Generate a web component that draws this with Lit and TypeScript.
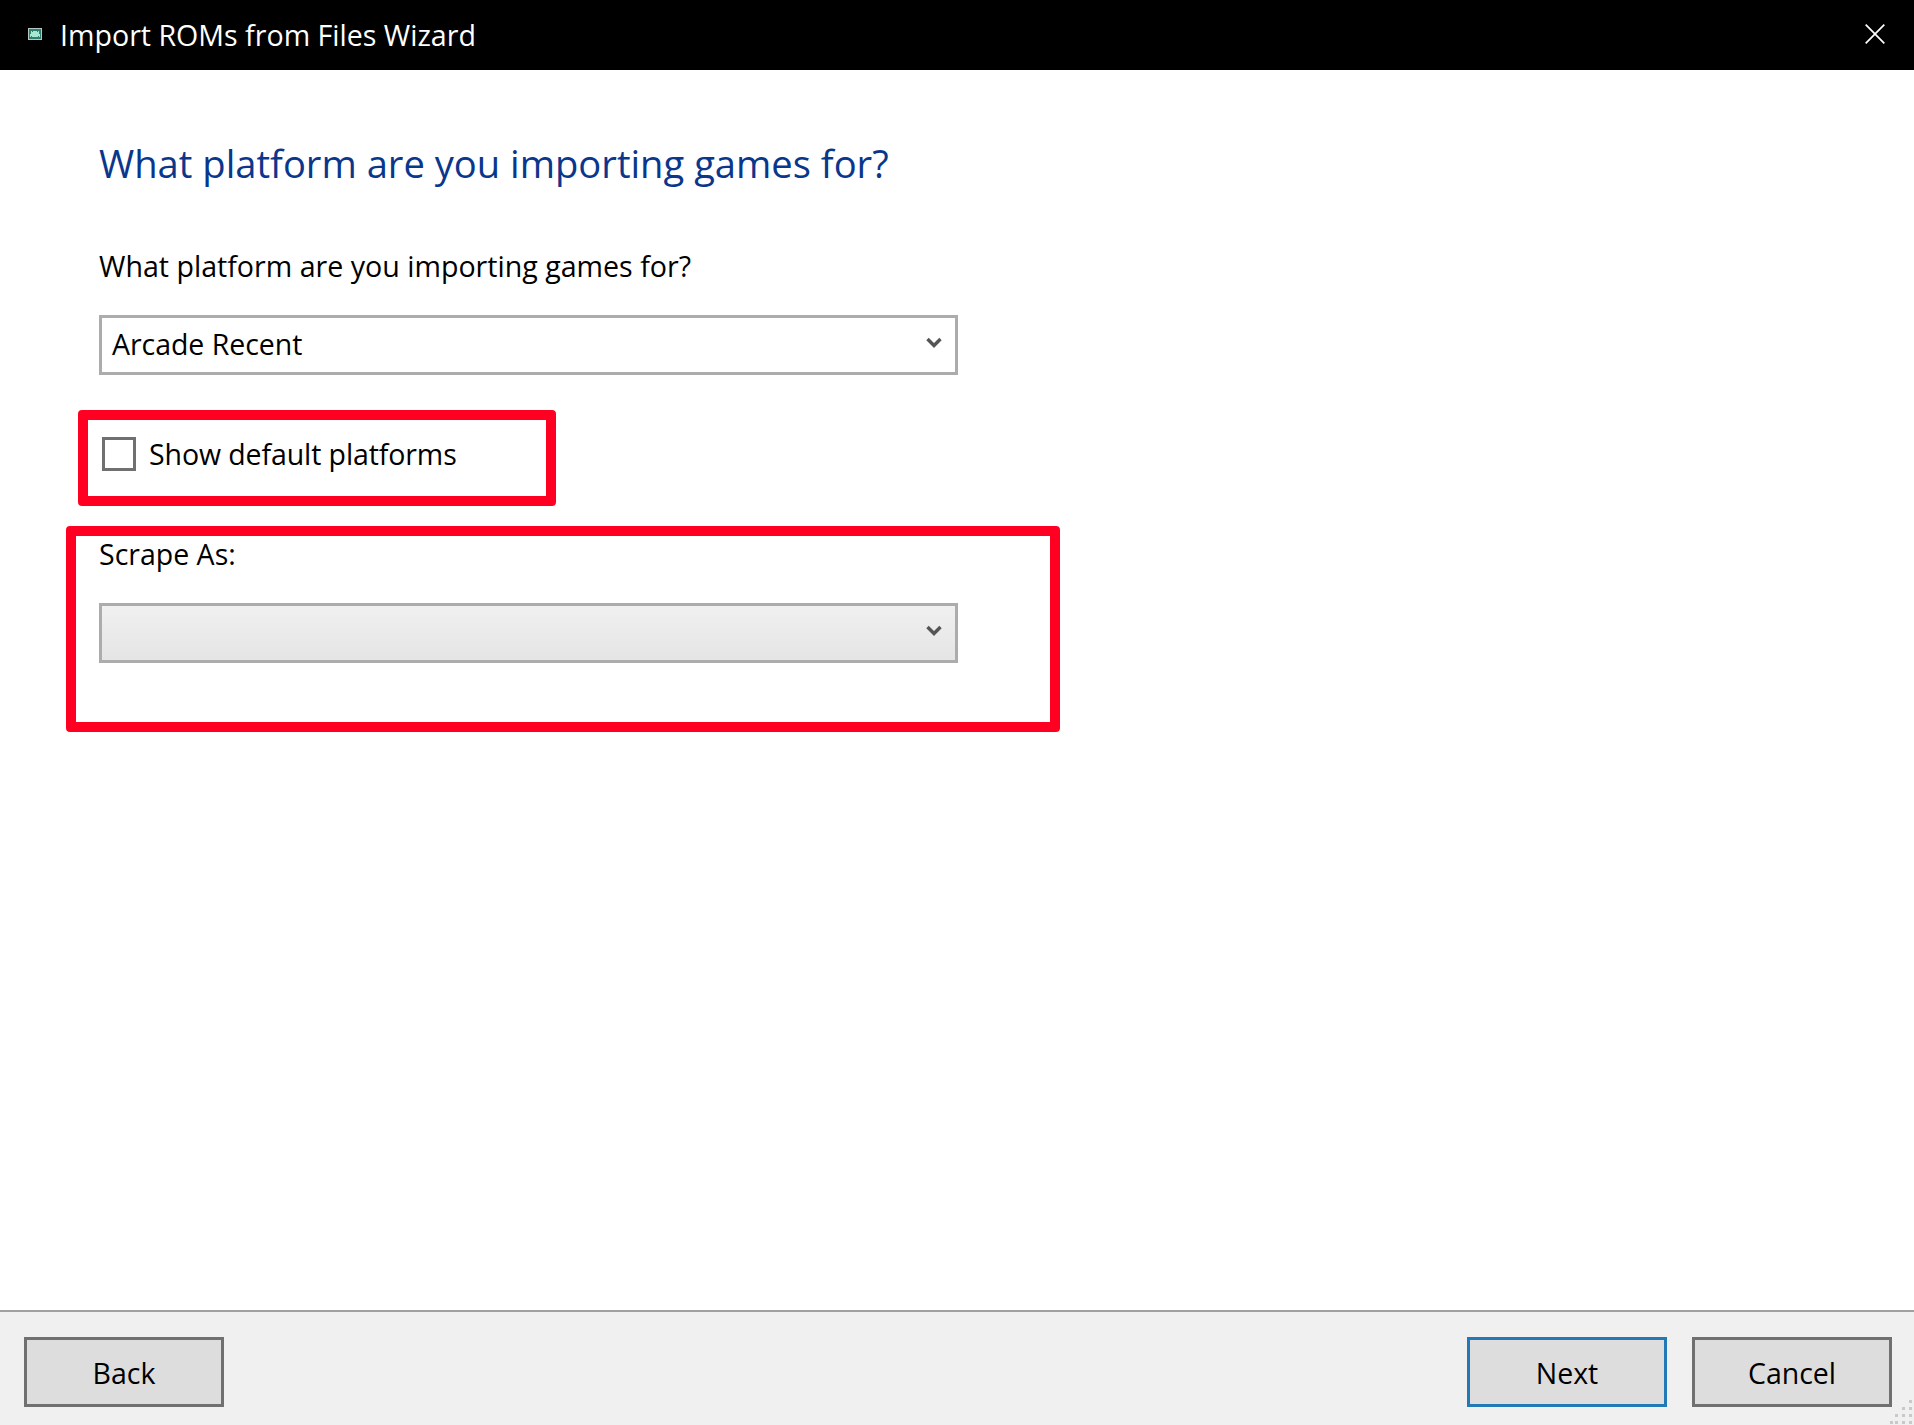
import { LitElement, html, css, svg } from "lit";
import { customElement } from "lit/decorators.js";

const chevron = html`<svg class="chev" width="16" height="11" viewBox="0 0 16 11"><path d="M1.5 2 L8 8.5 L14.5 2" fill="none" stroke="#555" stroke-width="3.4"/></svg>`;

const gripDots = [[19,2],[12,9],[19,9],[5,16],[12,16],[19,16],[0,23],[5,23],[12,23],[19,23]];

@customElement("app-root")
export class AppRoot extends LitElement {
  static styles = css`
    :host { display: block; }
    * { box-sizing: border-box; }
    .win {
      position: relative; width: 1914px; height: 1425px; background: #fff; color: #000;
      display: flex; flex-direction: column; overflow: hidden;
      font-family: "Open Sans", "Noto Sans", sans-serif; font-size: 28.5px;
    }
    .titlebar {
      height: 70px; flex: none; background: #000; color: #fff; display: flex; align-items: center;
      padding: 0 29px 0 28px;
    }
    .app-icon { flex: none; margin-right: 18px; margin-top: -2px; }
    .title { flex: 1; font-size: 28.6px; padding-bottom: 1px; }
    .close { flex: none; display: block; margin-top: -2px; }
    .content { flex: 1; padding: 0 0 0 99px; display: flex; flex-direction: column; align-items: flex-start; }
    h1 {
      margin: 67px 0 0; font-weight: 400; font-size: 38.15px; line-height: 52px; color: #0a378c; white-space: nowrap;
    }
    .label { line-height: 38px; white-space: nowrap; }
    .q { margin-top: 58px; font-size: 28.6px; }
    .select {
      width: 859px; height: 60px; border: 3px solid #acacac; background: #fff; display: flex; align-items: center;
      justify-content: space-between; padding: 0 13px 2px 10px; flex: none; letter-spacing: -0.05px;
    }
    .select.first { margin-top: 30px; }
    .select.disabled { background: linear-gradient(#f0f0f0, #e5e5e5); margin-top: 30px; }
    .chev { display: block; margin-top: -3px; }
    .check { display: flex; align-items: center; margin-top: 60px; margin-left: 3px; }
    .box { width: 34px; height: 34px; border: 3px solid #707070; background: #fff; flex: none; margin-right: 13px; }
    .check .label { letter-spacing: -0.1px; }
    .scrape { margin-top: 62px; }
    .footer {
      height: 115px; flex: none; background: #f0f0f0; border-top: 2px solid #a0a0a0;
      display: flex; justify-content: space-between; padding: 25px 22px 0 24px;
    }
    .group { display: flex; gap: 25px; }
    .btn {
      width: 200px; height: 70px; background: #dddddd; border: 3px solid #707070; display: flex; align-items: center;
      justify-content: center; padding-top: 1px;
    }
    .btn.default { border-color: #2379b5; }
    .mark { position: absolute; border: 10px solid #ff0022; border-radius: 4px; pointer-events: none; }
    .m1 { left: 78px; top: 410px; width: 478px; height: 96px; }
    .m2 { left: 66px; top: 526px; width: 994px; height: 206px; }
    .grip { position: absolute; right: 0; bottom: 0; display: block; }
  `;

  render() {
    return html`
      <div class="win">
        <div class="titlebar">
          <svg class="app-icon" width="14" height="12" viewBox="0 0 14 12">
            <rect width="14" height="12" fill="#b9c6c2"/>
            <rect x="1" y="1" width="12" height="10" fill="#2f7f70"/>
            <path d="M3 3h1v1h1V3h4v1h1V3h1v3h1v3h-1V8h-1v1H4V8H3v1H2V6h1z" fill="#a6e6d2"/>
          </svg>
          <span class="title">Import ROMs from Files Wizard</span>
          <svg class="close" width="20" height="20" viewBox="0 0 20 20">
            <path d="M0.7 0.7 L19.3 19.3 M19.3 0.7 L0.7 19.3" stroke="#fff" stroke-width="1.7" fill="none"/>
          </svg>
        </div>
        <div class="content">
          <h1>What platform are you importing games for?</h1>
          <div class="label q">What platform are you importing games for?</div>
          <div class="select first"><span>Arcade Recent</span>${chevron}</div>
          <div class="check"><span class="box"></span><span class="label">Show default platforms</span></div>
          <div class="label scrape">Scrape As:</div>
          <div class="select disabled"><span></span>${chevron}</div>
        </div>
        <div class="footer">
          <div class="btn">Back</div>
          <div class="group">
            <div class="btn default">Next</div>
            <div class="btn">Cancel</div>
          </div>
        </div>
        <div class="mark m1"></div>
        <div class="mark m2"></div>
        <svg class="grip" width="24" height="27" viewBox="0 0 24 27">
          ${gripDots.map(([x, y]) => svg`<rect x=${x} y=${y} width="3" height="3" fill="#c9c9c9"/>`)}
        </svg>
      </div>
    `;
  }
}
